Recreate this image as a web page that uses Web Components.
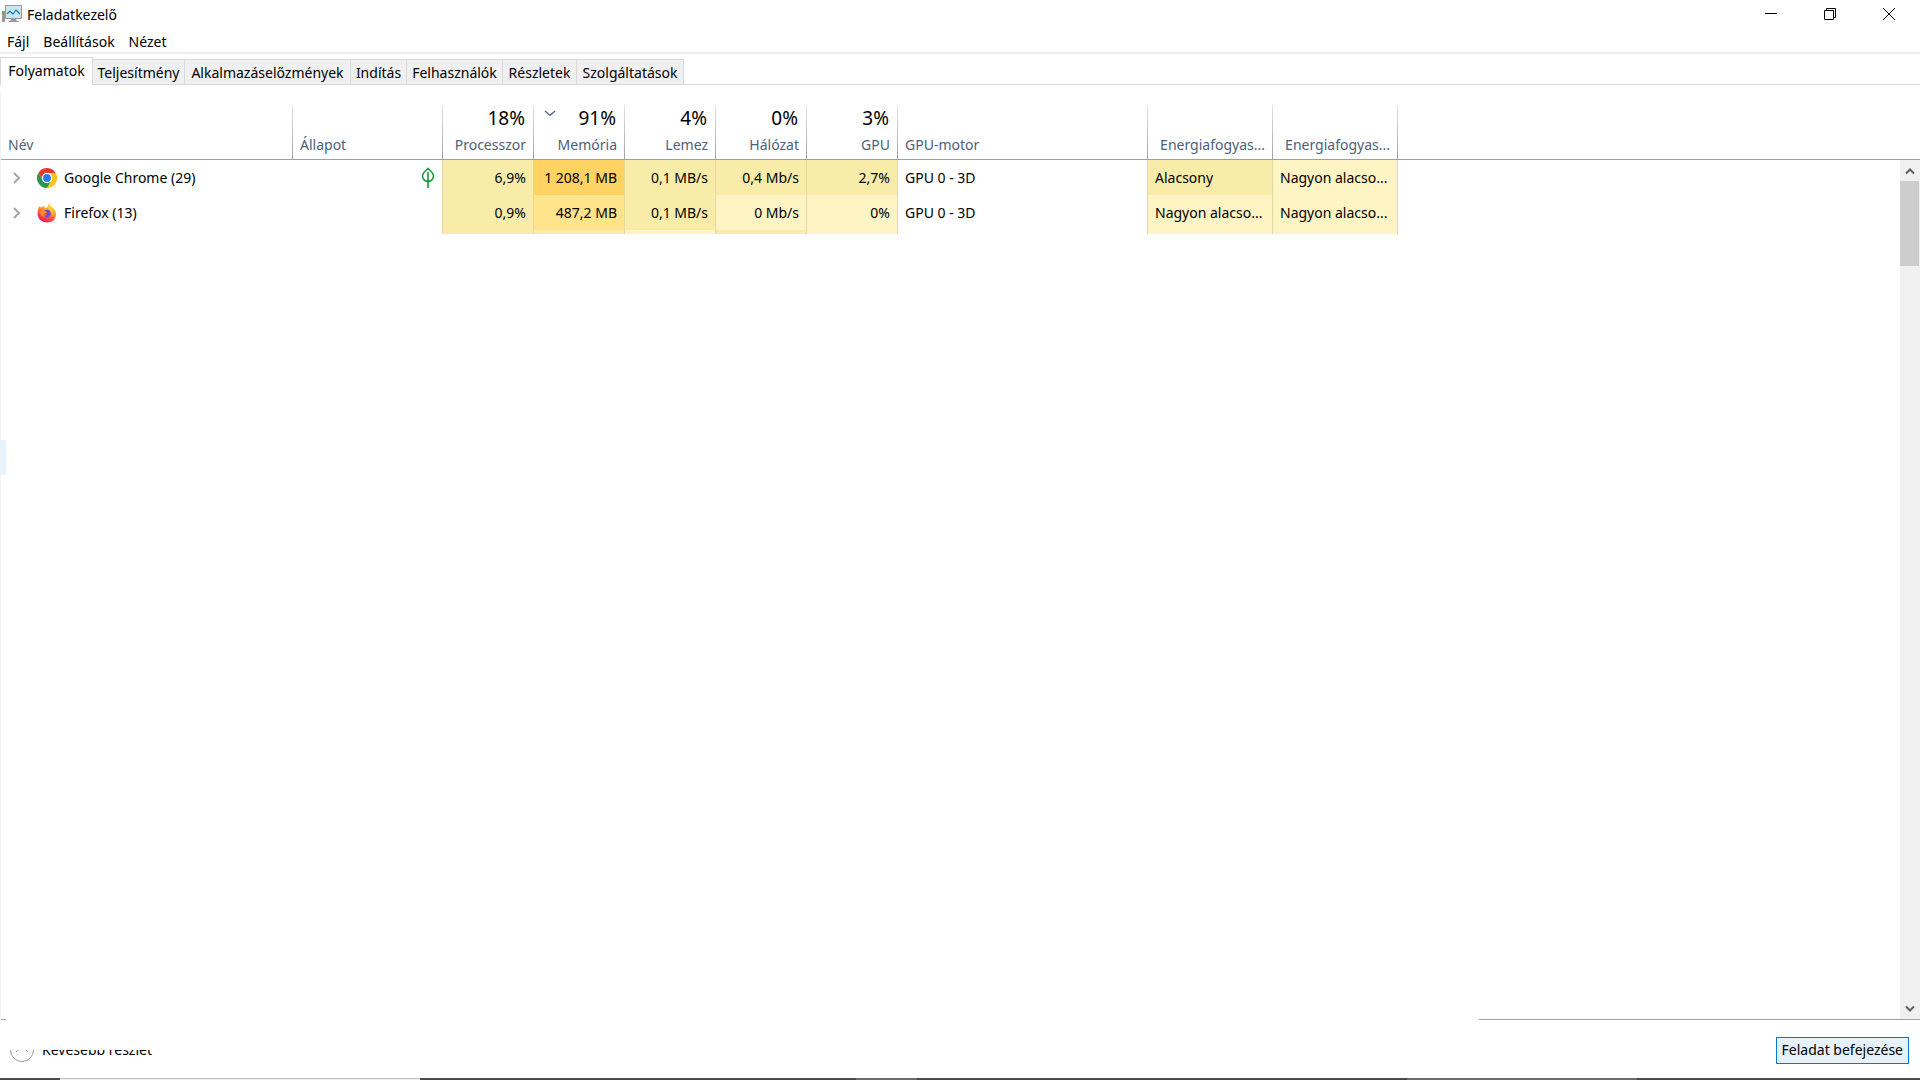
<!DOCTYPE html>
<html lang="hu">
<head>
<meta charset="utf-8">
<title>Feladatkezelő</title>
<style>
    html, body { height: 100%; }
    body {
        margin: 0;
        background: #fff;
        color: #000;
        font: 14px/20px "Noto Sans", "Open Sans", sans-serif;
    }
</style>
</head>
<body>
<task-window>
    <title-bar slot="title">Feladatkezelő</title-bar>
    <menu-bar slot="menu">
        <button>Fájl</button>
        <button>Beállítások</button>
        <button>Nézet</button>
    </menu-bar>
    <tab-strip slot="tabs">
        <button aria-selected="true">Folyamatok</button>
        <button>Teljesítmény</button>
        <button>Alkalmazáselőzmények</button>
        <button>Indítás</button>
        <button>Felhasználók</button>
        <button>Részletek</button>
        <button>Szolgáltatások</button>
    </tab-strip>
    <process-table></process-table>
    <status-bar slot="status">
        <span>Kevesebb részlet</span>
        <span slot="action">Feladat befejezése</span>
    </status-bar>
</task-window>

<script>
const ICONS = {
    chrome: `
        <svg width="20" height="20" viewBox="0 0 48 48" aria-hidden="true">
            <circle cx="24" cy="24" r="24" fill="#fff"/>
            <path d="M3.2 12A24 24 0 0 1 44.8 12H24A12 12 0 0 0 13.6 30Z" fill="#e33b2e"/>
            <path d="M44.8 12A24 24 0 0 1 24 48L34.4 30A12 12 0 0 0 24 12Z" fill="#fcc31e"/>
            <path d="M24 48A24 24 0 0 1 3.2 12L13.6 30A12 12 0 0 0 34.4 30Z" fill="#279847"/>
            <circle cx="24" cy="24" r="12" fill="#fff"/>
            <circle cx="24" cy="24" r="9.5" fill="#2a7bea"/>
        </svg>`,
    firefox: `
        <svg width="20" height="20" viewBox="0 0 40 40" aria-hidden="true">
            <defs>
                <linearGradient id="fox" x1=".8" y1="0" x2=".3" y2="1">
                    <stop offset="0" stop-color="#fff04a"/>
                    <stop offset=".35" stop-color="#ffae25"/>
                    <stop offset=".65" stop-color="#ff5738"/>
                    <stop offset="1" stop-color="#e80f72"/>
                </linearGradient>
            </defs>
            <path d="M5 6Q7 8 9 9Q12 6 14 5Q14 8 17 10Q22 9 22 5Q23 2 25 0Q26 6 31 9Q39 15 38 24Q36 39 20 39Q3 38 1 23Q1 12 5 6Z" fill="url(#fox)"/>
            <path d="M13 17Q18 11 24 14Q30 19 26 26Q21 31 14 26Q18 27 20 23Q13 22 13 17Z" fill="#7645d9"/>
            <path d="M5 16Q12 12 20 18Q18 22 14 22Q12 25 17 26Q11 30 8 24Z" fill="#ff8a24"/>
            <path d="M23 12Q31 16 30 25Q32 22 32 18Q28 9 23 7Z" fill="#ffd33d"/>
        </svg>`,
    leaf: `
        <svg width="14" height="22" viewBox="0 0 14 22" fill="none" stroke="#199a3a" stroke-width="1.6" aria-hidden="true">
            <path d="M7 1.5C4.5 4 1.5 6 1.5 9C1.5 12 4 14.5 7 14.5C10 14.5 12.500 12 12.500 9C12.500 6 9.500 4 7 1.500ZM7 5V21"/>
        </svg>`,
    monitor: `
        <svg width="20" height="18" viewBox="0 0 20 18" aria-hidden="true">
            <path d="M0 6h3v11H0z" fill="#999"/>
            <path d="M0 7h2v2H0z" fill="#3fbf3f"/>
            <path d="M9 14h5l1 2h2v1H7v-1h1z" fill="#999"/>
            <rect x="3.500" y=".5" width="16" height="13" fill="#ddd" stroke="#9b9b9b"/>
            <rect x="5" y="2" width="13" height="10" fill="#c3ebfb"/>
            <path d="M5 9l3-3 3 3 3-4 4 4" fill="none" stroke="#1c7eb4" stroke-width="1.2"/>
        </svg>`,
};

class BaseElement extends HTMLElement {
    constructor(){
        super();
        this.attachShadow({ mode: 'open' });
        this.shadowRoot.innerHTML = `<style>${this._getCSS()}</style>${this._getHTML()}`;
    }
}

class TaskWindow extends BaseElement {
    _getHTML(){
        return `
            <slot name="title"></slot>
            <slot name="menu"></slot>
            <slot name="tabs"></slot>
            <main><slot></slot></main>
            <slot name="status"></slot>
            <div id="blank"></div>
        `;
    }
    _getCSS(){
        return `
            :host {
                position: relative;
                display: flex;
                flex-direction: column;
                height: 100vh;
                overflow: hidden;
            }
            main {
                flex: 1;
                display: flex;
                min-height: 0;
                margin-top: 7px;
                border-left: 1px solid #f0f0f0;
            }
            /* unpainted area over the list and the footer */
            #blank {
                position: absolute;
                inset: 234px 441px 30px 6px;
                background: #fff;
            }
        `;
    }
}

class TitleBar extends BaseElement {
    _getHTML(){
        return `
            ${ICONS.monitor}
            <h1><slot></slot></h1>
            <button aria-label="Kis méret">
                <svg width="12" height="12" viewBox="0 0 12 12"><path d="M0 5.500H12"/></svg>
            </button>
            <button aria-label="Előző méret">
                <svg width="12" height="12" viewBox="0 0 12 12"><path d="M.5 2.500H9.500V11.500H.5ZM2.500 2.500V.5H11.500V9.500H9.500"/></svg>
            </button>
            <button aria-label="Bezárás">
                <svg width="12" height="12" viewBox="0 0 12 12"><path d="M0 0L12 12M12 0L0 12"/></svg>
            </button>
        `;
    }
    _getCSS(){
        return `
            :host {
                display: flex;
                align-items: center;
                height: 28px;
                padding: 0 2px 2px 2px;
            }
            h1 {
                flex: 1;
                margin: 0 0 0 5px;
                font: inherit;
                line-height: 22px;
                padding-top: 2px;
            }
            button {
                display: grid;
                place-items: center;
                width: 59px;
                height: 28px;
                padding: 0;
                border: 0;
                background: none;
            }
            button svg { fill: none; stroke: #000; }
        `;
    }
}

class MenuBar extends BaseElement {
    _getHTML(){
        return `<nav><slot></slot></nav>`;
    }
    _getCSS(){
        return `
            :host {
                display: block;
                border-bottom: 2px solid #f0f0f0;
            }
            nav {
                display: flex;
                gap: 14px;
                height: 22px;
                padding-left: 7px;
            }
            ::slotted(button) {
                padding: 2px 0 0;
                border: 0;
                background: none;
                color: inherit;
                font: inherit;
            }
        `;
    }
}

class TabStrip extends BaseElement {
    connectedCallback(){
        this.setAttribute('role', 'tablist');
        for(let tab of this.children){
            tab.setAttribute('role', 'tab');
        }
    }
    _getHTML(){
        return `<slot></slot><i></i>`;
    }
    _getCSS(){
        return `
            :host {
                display: grid;
                grid-template-columns: 93px 92px 166px 56px 96px 74px 107px 1fr;
                height: 28px;
                padding-top: 3px;
            }
            ::slotted(button) {
                margin: 2px 0 0;
                padding: 2px 0 0;
                border: solid #d9d9d9;
                border-width: 1px 1px 1px 0;
                background: #f0f0f0;
                color: inherit;
                font: inherit;
                white-space: nowrap;
            }
            ::slotted([aria-selected="true"]) {
                margin: 0;
                padding: 0 0 2px;
                border-width: 1px 1px 0 1px;
                background: #fff;
            }
            i { border-bottom: 1px solid #d9d9d9; }
        `;
    }
}

class ScrollBar extends BaseElement {
    _getHTML(){
        return `
            <button aria-label="Fel"><svg width="10" height="8" viewBox="0 0 10 8"><path d="M1 6.500L5 2.500L9 6.500"/></svg></button>
            <div id="thumb"></div>
            <button aria-label="Le"><svg width="10" height="8" viewBox="0 0 10 8"><path d="M1 1.500L5 5.500L9 1.500"/></svg></button>
        `;
    }
    _getCSS(){
        return `
            :host {
                display: flex;
                flex-direction: column;
                width: 20px;
                background: #f0f0f0;
            }
            button {
                display: grid;
                place-items: center;
                height: 21px;
                padding: 0 1px 0 0;
                border: 0;
                background: none;
            }
            button:last-child { margin-top: auto; }
            svg { fill: none; stroke: #606060; stroke-width: 2; }
            #thumb {
                height: 85px;
                margin-right: 1px;
                background: #cdcdcd;
            }
        `;
    }
}

const COLUMNS = [
    { label: 'Név', width: 292 },
    { label: 'Állapot', width: 150 },
    { label: 'Processzor', width: 91, total: '18%' },
    { label: 'Memória', width: 91, total: '91%', sorted: true },
    { label: 'Lemez', width: 91, total: '4%' },
    { label: 'Hálózat', width: 91, total: '0%' },
    { label: 'GPU', width: 91, total: '3%' },
    { label: 'GPU-motor', width: 250 },
    { label: 'Energiafogyas...', width: 125, right: true },
    { label: 'Energiafogyas...', width: 125, right: true },
];

// heat: one level for each column, 0 is no colour
const ROWS = [
    {
        name: 'Google Chrome (29)', icon: 'chrome', leaf: true, heat: [0, 0, 2, 4, 2, 2, 2, 0, 2, 1],
        values: ['6,9%', '1 208,1 MB', '0,1 MB/s', '0,4 Mb/s', '2,7%', 'GPU 0 - 3D', 'Alacsony', 'Nagyon alacso...'],
    },
    {
        name: 'Firefox (13)', icon: 'firefox', heat: [0, 0, 2, 3, 2, 1, 1, 0, 1, 1],
        values: ['0,9%', '487,2 MB', '0,1 MB/s', '0 Mb/s', '0%', 'GPU 0 - 3D', 'Nagyon alacso...', 'Nagyon alacso...'],
    },
    { heat: [0, 0, 2, 2, 1, 2, 1, 0, 1, 1] },
    {}, {}, {}, {}, {},
    { hover: true },
];

class ProcessTable extends BaseElement {
    _getHTML(){
        return `
            <div id="top"></div>
            <div id="list">
                <table>
                    <colgroup>${COLUMNS.map(c => `<col style="width: ${c.width}px">`).join('')}</colgroup>
                    <thead><tr>${COLUMNS.map(this._getHeader).join('')}</tr></thead>
                    <tbody>${ROWS.map(row => this._getRow(row)).join('')}</tbody>
                </table>
                <scroll-bar></scroll-bar>
            </div>
        `;
    }
    _getHeader(column){
        const right = column.total || column.right;
        return `
            <th scope="col" class="${right ? 'right' : ''}">
                <div class="total">
                    ${column.sorted ? '<svg width="12" height="7" viewBox="0 0 12 7"><path d="M1 1L6 5.500L11 1"/></svg>' : ''}
                    <b>${column.total ?? ''}</b>
                </div>
                ${column.label}
            </th>
        `;
    }
    _getRow(row){
        if(!row.name && !row.heat){
            return `<tr class="${row.hover ? 'hover' : ''}"><td colspan="10"></td></tr>`;
        }
        const name = !row.name ? '' : `
            <div class="name">
                <button aria-label="Kibontás"><svg width="8" height="12" viewBox="0 0 8 12"><path d="M1 1L6 6L1 11"/></svg></button>
                ${ICONS[row.icon]}
                <span>${row.name}</span>
            </div>
        `;
        const cells = [name, row.leaf ? ICONS.leaf : '', ...(row.values ?? Array(8).fill(''))];
        return `<tr>${cells.map((cell, i) => {
            const right = i > 0 && i < 7 ? 'right' : '';
            return `<td class="heat-${row.heat[i]} ${right}">${cell}</td>`;
        }).join('')}</tr>`;
    }
    _getCSS(){
        return `
            :host {
                flex: 1;
                display: flex;
                flex-direction: column;
                min-width: 0;
            }
            #top {
                height: 67px;
                margin-bottom: -68px;
                border-bottom: 1px solid #a0a0a0;
            }
            #list {
                flex: 1;
                display: flex;
                justify-content: space-between;
                align-items: start;
                min-height: 0;
                padding-top: 13px;
                overflow: hidden;
            }
            scroll-bar {
                align-self: stretch;
                margin-top: 55px;
            }
            table {
                table-layout: fixed;
                width: 1397px;
                border-collapse: separate;
                border-spacing: 0;
            }
            th {
                height: 54px;
                padding: 0 7px 4px;
                border-right: 1px solid;
                border-image: linear-gradient(#e5e5e5, #a0a0a0) 1;
                border-bottom: 0;
                color: #4c607a;
                font-weight: normal;
                text-align: left;
                vertical-align: bottom;
                box-sizing: border-box;
                white-space: nowrap;
            }
            .total {
                display: flex;
                justify-content: space-between;
                height: 28px;
            }
            .total b {
                margin-left: auto;
                padding-right: 1px;
                color: #000;
                font-size: 19px;
                line-height: 22px;
                font-weight: normal;
            }
            .total svg {
                margin: 3px 0 0 3px;
                fill: none;
                stroke: #4c607a;
                stroke-width: 1.3;
            }
            tbody::before { content: ''; display: block; height: 1px; }
            td {
                height: 35px;
                padding: 0 7px;
                box-sizing: border-box;
                white-space: nowrap;
            }
            .right { text-align: right; }
            td svg { vertical-align: middle; }
            td[class*="heat-"]:not(:first-child) { border-right: 1px solid #ead7a0; }
            .heat-1 { background: #fff4c4; }
            .heat-2 { background: #f9eca8; }
            .heat-3 { background: #ffe48b; }
            .heat-4 { background: #ffd264; }
            .hover { background: #e5f3ff; }
            .name {
                display: flex;
                align-items: center;
                padding-left: 5px;
            }
            .name span { margin-left: 7px; }
            .name button {
                display: flex;
                width: 24px;
                padding: 0;
                border: 0;
                background: none;
            }
            .name button svg {
                fill: none;
                stroke: #a6a6a6;
                stroke-width: 2;
            }
        `;
    }
}

class StatusBar extends BaseElement {
    _getHTML(){
        return `
            <footer>
                <button id="less">
                    <svg width="26" height="26" viewBox="0 0 26 26"><circle cx="13" cy="13" r="11.500"/><path d="M7 15L13 9.500L19 15"/></svg>
                    <slot></slot>
                </button>
                <button id="end"><slot name="action"></slot></button>
            </footer>
            <div id="edge"><i></i><i></i><i></i><i></i><i></i><i></i></div>
        `;
    }
    _getCSS(){
        return `
            :host { display: block; }
            footer {
                display: flex;
                justify-content: space-between;
                align-items: center;
                height: 56px;
                margin-left: 1px;
                padding: 2px 11px 0 8px;
                border-top: 1px solid #a0a0a0;
            }
            button {
                color: inherit;
                font: inherit;
                white-space: nowrap;
            }
            #less {
                display: flex;
                align-items: center;
                gap: 7px;
                padding: 0;
                border: 0;
                background: none;
            }
            #less svg { fill: none; stroke: #999; }
            #end {
                height: 27px;
                padding: 0 5px;
                border: 1px solid #0078d7;
                background: #e5f1fb;
            }
            #edge {
                display: grid;
                grid-template-columns: 60fr 360fr 436fr 61fr 490fr 230fr 283fr;
                height: 2px;
                background: #4a4a4a;
            }
            #edge i:nth-child(2) { background: linear-gradient(#bdbdbd 50%, #f0f0f0 50%); }
            #edge i:nth-child(4), #edge i:nth-child(6) { background: #6c6c6c; }
        `;
    }
}

window.customElements.define('title-bar', TitleBar);
window.customElements.define('menu-bar', MenuBar);
window.customElements.define('tab-strip', TabStrip);
window.customElements.define('scroll-bar', ScrollBar);
window.customElements.define('process-table', ProcessTable);
window.customElements.define('status-bar', StatusBar);
window.customElements.define('task-window', TaskWindow);
</script>
</body>
</html>
